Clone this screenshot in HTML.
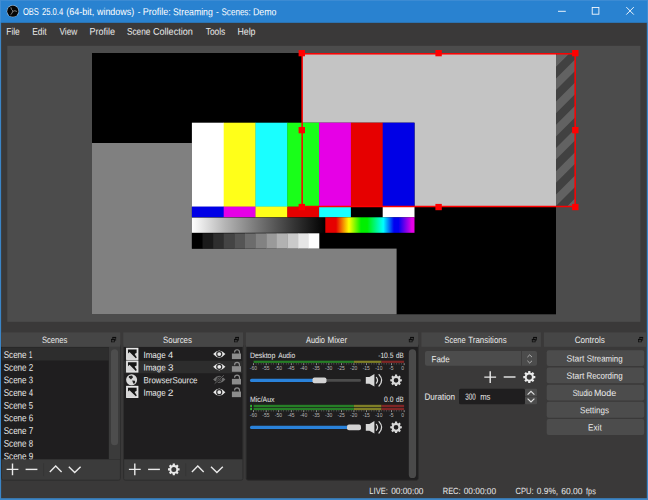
<!DOCTYPE html>
<html>
<head>
<meta charset="utf-8">
<title>OBS 25.0.4 (64-bit, windows) - Profile: Streaming - Scenes: Demo</title>
<style>
html,body{margin:0;padding:0;}
body{width:648px;height:500px;overflow:hidden;background:#3a3939;font-family:"Liberation Sans",sans-serif;}
svg{display:block;}
text{font-family:"Liberation Sans",sans-serif;}
</style>
</head>
<body>
<svg width="648" height="500" viewBox="0 0 648 500">
<defs>
<linearGradient id="gGray" x1="0" x2="1" y1="0" y2="0"><stop offset="0" stop-color="#fff"/><stop offset="0.25" stop-color="#b4b4b4"/><stop offset="0.5" stop-color="#747474"/><stop offset="0.75" stop-color="#383838"/><stop offset="1" stop-color="#000"/></linearGradient>
<linearGradient id="gRain" x1="0" x2="1" y1="0" y2="0"><stop offset="0" stop-color="#e60000"/><stop offset="0.12" stop-color="#e60000"/><stop offset="0.265" stop-color="#ffff00"/><stop offset="0.40" stop-color="#00f000"/><stop offset="0.47" stop-color="#00f000"/><stop offset="0.65" stop-color="#00ffff"/><stop offset="0.77" stop-color="#0000f0"/><stop offset="0.82" stop-color="#0000f0"/><stop offset="0.97" stop-color="#e600e6"/><stop offset="1" stop-color="#e600e6"/></linearGradient>
<clipPath id="cScenes"><rect x="1.4" y="346.8" width="118.9" height="112.7"/></clipPath>
</defs>
<rect x="0.00" y="0.00" width="648.00" height="500.00" fill="#3a3939"/>
<rect x="0.00" y="0.00" width="648.00" height="22.80" fill="#2982d0"/>
<rect x="0.00" y="0.00" width="648.00" height="0.90" fill="#3f8dd4"/>
<rect x="0.00" y="0.00" width="1.00" height="22.80" fill="#3f8dd4"/>
<rect x="647.00" y="0.00" width="1.00" height="22.80" fill="#3f8dd4"/>
<rect x="0.00" y="22.80" width="1.10" height="478.00" fill="#3b85c7"/>
<rect x="646.80" y="22.80" width="1.20" height="478.00" fill="#3b85c7"/>
<rect x="0.00" y="498.20" width="648.00" height="1.80" fill="#3b85c7"/>
<g transform="translate(6.45 4.75) scale(0.5333)"><circle cx="12" cy="12" r="11.5" fill="#a9c8e6"/><circle cx="12" cy="12" r="10.6" fill="#050505"/><path d="M11.6 11.2 Q8.6 9.6 8.4 5.6 M12.9 12 Q15.5 9.8 19 12.2 M11.5 12.8 Q11.6 16.4 8.2 18.4" stroke="#8c8c8c" stroke-width="1.7" stroke-linecap="round" fill="none"/></g>
<path d="M558 11.3 H565.8" stroke="#fff" stroke-width="0.9" fill="none"/>
<rect x="592.2" y="7.5" width="6.7" height="6.7" stroke="#fff" stroke-width="0.85" fill="none"/>
<path d="M626.3 7.1 L633.8 14.6 M633.8 7.1 L626.3 14.6" stroke="#fff" stroke-width="0.9" fill="none"/>
<rect x="7.30" y="45.80" width="633.10" height="276.00" fill="#4c4c4c"/>
<rect x="92.00" y="53.00" width="464.00" height="261.30" fill="#000"/>
<rect x="92.00" y="143.00" width="304.60" height="171.30" fill="#808080"/>
<rect x="302.00" y="53.50" width="254.00" height="153.00" fill="#c4c4c4"/>
<rect x="556.00" y="53.50" width="19.00" height="153.00" fill="#414141"/>
<clipPath id="cHatch"><rect x="556" y="53.5" width="19" height="153"/></clipPath>
<path d="M555 33.00 L576 12.00 L576 23.60 L555 44.60 Z M555 56.20 L576 35.20 L576 46.80 L555 67.80 Z M555 79.40 L576 58.40 L576 70.00 L555 91.00 Z M555 102.60 L576 81.60 L576 93.20 L555 114.20 Z M555 125.80 L576 104.80 L576 116.40 L555 137.40 Z M555 149.00 L576 128.00 L576 139.60 L555 160.60 Z M555 172.20 L576 151.20 L576 162.80 L555 183.80 Z M555 195.40 L576 174.40 L576 186.00 L555 207.00 Z M555 218.60 L576 197.60 L576 209.20 L555 230.20 Z M555 241.80 L576 220.80 L576 232.40 L555 253.40 Z" fill="#626262" clip-path="url(#cHatch)"/>
<rect x="191.90" y="122.70" width="222.60" height="125.90" fill="#000"/>
<rect x="191.90" y="122.70" width="32.10" height="84.20" fill="#ffffff"/>
<rect x="223.70" y="122.70" width="32.10" height="84.20" fill="#ffff19"/>
<rect x="255.50" y="122.70" width="32.10" height="84.20" fill="#19ffff"/>
<rect x="287.30" y="122.70" width="32.10" height="84.20" fill="#19ff19"/>
<rect x="319.10" y="122.70" width="32.10" height="84.20" fill="#e600e6"/>
<rect x="350.90" y="122.70" width="32.10" height="84.20" fill="#e60000"/>
<rect x="382.70" y="122.70" width="31.80" height="84.20" fill="#0000e6"/>
<rect x="191.90" y="206.60" width="32.10" height="10.70" fill="#0000e6"/>
<rect x="223.70" y="206.60" width="32.10" height="10.70" fill="#e600e6"/>
<rect x="255.50" y="206.60" width="32.10" height="10.70" fill="#ffff19"/>
<rect x="287.30" y="206.60" width="32.10" height="10.70" fill="#e60000"/>
<rect x="319.10" y="206.60" width="32.10" height="10.70" fill="#19ffff"/>
<rect x="350.90" y="206.60" width="32.10" height="10.70" fill="#000000"/>
<rect x="382.70" y="206.60" width="31.80" height="10.70" fill="#ffffff"/>
<rect x="191.90" y="217.60" width="133.40" height="15.20" fill="url(#gGray)"/>
<rect x="325.30" y="217.30" width="89.20" height="15.50" fill="url(#gRain)"/>
<rect x="191.90" y="233.30" width="10.92" height="15.30" fill="#000000"/>
<rect x="202.52" y="233.30" width="10.92" height="15.30" fill="#1a1a1a"/>
<rect x="213.13" y="233.30" width="10.92" height="15.30" fill="#2e2e2e"/>
<rect x="223.75" y="233.30" width="10.92" height="15.30" fill="#444444"/>
<rect x="234.37" y="233.30" width="10.92" height="15.30" fill="#555555"/>
<rect x="244.98" y="233.30" width="10.92" height="15.30" fill="#6c6c6c"/>
<rect x="255.60" y="233.30" width="10.92" height="15.30" fill="#828282"/>
<rect x="266.22" y="233.30" width="10.92" height="15.30" fill="#9a9a9a"/>
<rect x="276.83" y="233.30" width="10.92" height="15.30" fill="#b2b2b2"/>
<rect x="287.45" y="233.30" width="10.92" height="15.30" fill="#cacaca"/>
<rect x="298.07" y="233.30" width="10.92" height="15.30" fill="#e6e6e6"/>
<rect x="308.68" y="233.30" width="10.62" height="15.30" fill="#ffffff"/>
<rect x="302.15" y="53.8" width="273.0" height="152.7" fill="none" stroke="#ff0000" stroke-width="1.5"/>
<rect x="298.60" y="50.00" width="6.40" height="6.30" fill="#ff0000"/>
<rect x="298.60" y="127.00" width="6.40" height="6.30" fill="#ff0000"/>
<rect x="298.60" y="203.90" width="6.40" height="6.30" fill="#ff0000"/>
<rect x="435.40" y="50.00" width="6.40" height="6.30" fill="#ff0000"/>
<rect x="435.40" y="203.90" width="6.40" height="6.30" fill="#ff0000"/>
<rect x="572.10" y="50.00" width="6.40" height="6.30" fill="#ff0000"/>
<rect x="572.10" y="127.00" width="6.40" height="6.30" fill="#ff0000"/>
<rect x="572.10" y="203.90" width="6.40" height="6.30" fill="#ff0000"/>
<rect x="1.50" y="344.00" width="118.90" height="136.20" rx="1.8" fill="#3b3b3b" stroke="#2c2c2c" stroke-width="0.9"/>
<rect x="1.10" y="346.80" width="118.90" height="112.50" fill="#1f1e1f"/>
<rect x="1.60" y="347.30" width="107.20" height="13.20" fill="#2d2d2d"/>
<rect x="108.80" y="346.90" width="11.20" height="112.40" fill="#3b3b3b"/>
<rect x="111.00" y="349.30" width="7.10" height="96.00" rx="3.5" fill="#4d4d4d"/>
<g clip-path="url(#cScenes)">
<text x="3.74" y="357.95" font-size="9.8" fill="#eaeaea" transform="rotate(0.05 3.74 357.95)"><tspan x="3.74" textLength="22.84" lengthAdjust="spacingAndGlyphs">Scene</tspan> <tspan x="29.00" textLength="3.32" lengthAdjust="spacingAndGlyphs">1</tspan></text>
<text x="3.74" y="370.63" font-size="9.8" fill="#eaeaea" transform="rotate(0.05 3.74 370.63)"><tspan x="3.74" textLength="22.84" lengthAdjust="spacingAndGlyphs">Scene</tspan> <tspan x="28.65" textLength="4.47" lengthAdjust="spacingAndGlyphs">2</tspan></text>
<text x="3.74" y="383.31" font-size="9.8" fill="#eaeaea" transform="rotate(0.05 3.74 383.31)"><tspan x="3.74" textLength="22.84" lengthAdjust="spacingAndGlyphs">Scene</tspan> <tspan x="28.78" textLength="4.29" lengthAdjust="spacingAndGlyphs">3</tspan></text>
<text x="3.74" y="395.99" font-size="9.8" fill="#eaeaea" transform="rotate(0.05 3.74 395.99)"><tspan x="3.74" textLength="22.84" lengthAdjust="spacingAndGlyphs">Scene</tspan> <tspan x="28.90" textLength="4.03" lengthAdjust="spacingAndGlyphs">4</tspan></text>
<text x="3.74" y="408.67" font-size="9.8" fill="#eaeaea" transform="rotate(0.05 3.74 408.67)"><tspan x="3.74" textLength="22.84" lengthAdjust="spacingAndGlyphs">Scene</tspan> <tspan x="28.74" textLength="4.33" lengthAdjust="spacingAndGlyphs">5</tspan></text>
<text x="3.74" y="421.35" font-size="9.8" fill="#eaeaea" transform="rotate(0.05 3.74 421.35)"><tspan x="3.74" textLength="22.84" lengthAdjust="spacingAndGlyphs">Scene</tspan> <tspan x="28.65" textLength="4.43" lengthAdjust="spacingAndGlyphs">6</tspan></text>
<text x="3.74" y="434.03" font-size="9.8" fill="#eaeaea" transform="rotate(0.05 3.74 434.03)"><tspan x="3.74" textLength="22.84" lengthAdjust="spacingAndGlyphs">Scene</tspan> <tspan x="28.65" textLength="4.47" lengthAdjust="spacingAndGlyphs">7</tspan></text>
<text x="3.74" y="446.71" font-size="9.8" fill="#eaeaea" transform="rotate(0.05 3.74 446.71)"><tspan x="3.74" textLength="22.84" lengthAdjust="spacingAndGlyphs">Scene</tspan> <tspan x="28.74" textLength="4.33" lengthAdjust="spacingAndGlyphs">8</tspan></text>
<text x="3.74" y="459.39" font-size="9.8" fill="#eaeaea" transform="rotate(0.05 3.74 459.39)"><tspan x="3.74" textLength="22.84" lengthAdjust="spacingAndGlyphs">Scene</tspan> <tspan x="28.69" textLength="4.43" lengthAdjust="spacingAndGlyphs">9</tspan></text>
</g>
<g transform="translate(0.4 0.1)">
<path d="M6.2 469.3 H18 M12.1 463.4 V475.2" stroke="#eaeaea" stroke-width="1.4" fill="none"/>
<path d="M25.2 469.3 H37" stroke="#eaeaea" stroke-width="1.4" fill="none"/>
<path d="M49.4 471.8 L55.3 466 L61.2 471.8" stroke="#eaeaea" stroke-width="1.4" fill="none"/>
<path d="M68.4 466.6 L74.3 472.4 L80.2 466.6" stroke="#eaeaea" stroke-width="1.4" fill="none"/>
<path d="M43.2 463 V476" stroke="#333" stroke-width="0.7" fill="none"/>
</g>
<rect x="123.60" y="344.00" width="119.30" height="136.20" rx="1.8" fill="#3b3b3b" stroke="#2c2c2c" stroke-width="0.9"/>
<rect x="124.00" y="346.80" width="118.50" height="112.50" fill="#1f1e1f"/>
<rect x="124.00" y="360.80" width="118.50" height="12.50" fill="#2d2d2d"/>
<g transform="translate(0.7 0.1)">
<path d="M128.2 469.3 H140 M134.1 463.4 V475.2" stroke="#eaeaea" stroke-width="1.4" fill="none"/>
<path d="M147.4 469.3 H159.2" stroke="#eaeaea" stroke-width="1.4" fill="none"/>
<path d="M191.2 471.8 L197.1 466 L203 471.8" stroke="#eaeaea" stroke-width="1.4" fill="none"/>
<path d="M210.3 466.6 L216.2 472.4 L222.1 466.6" stroke="#eaeaea" stroke-width="1.4" fill="none"/>
<path d="M185 463 V476" stroke="#333" stroke-width="0.7" fill="none"/>
<path d="M177.45 468.15 L178.90 468.24 L178.90 470.36 L177.45 470.45 L176.99 471.56 L177.95 472.65 L176.45 474.15 L175.36 473.19 L174.25 473.65 L174.16 475.10 L172.04 475.10 L171.95 473.65 L170.84 473.19 L169.75 474.15 L168.25 472.65 L169.21 471.56 L168.75 470.45 L167.30 470.36 L167.30 468.24 L168.75 468.15 L169.21 467.04 L168.25 465.95 L169.75 464.45 L170.84 465.41 L171.95 464.95 L172.04 463.50 L174.16 463.50 L174.25 464.95 L175.36 465.41 L176.45 464.45 L177.95 465.95 L176.99 467.04 Z M175.60 469.30 A2.50 2.50 0 1 0 170.60 469.30 A2.50 2.50 0 1 0 175.60 469.30 Z" fill="#eaeaea" fill-rule="evenodd"/>
</g>
<rect x="126.10" y="347.80" width="12.3" height="12.1" fill="#ececec"/>
<rect x="127.10" y="348.80" width="10.3" height="10.1" fill="#d6d6d6"/>
<path d="M128.00 349.60 L136.60 349.60 L136.60 352.80 L134.60 353.90 L136.80 357.40 L135.80 358.30 L129.50 352.10 L128.00 353.50 Z" fill="#161616"/>
<path d="M213.15 354.10 Q219.25 346.80 225.35 354.10 Q219.25 361.40 213.15 354.10 Z" fill="#e8e8e8"/>
<circle cx="219.25" cy="354.10" r="2.5" fill="none" stroke="#2a2a2a" stroke-width="1.2"/>
<rect x="231.90" y="353.50" width="9.1" height="5.6" fill="#8c8c8c"/>
<path d="M234.60 352.50 V352.20 A2.45 2.45 0 0 1 239.50 352.20 V353.70" stroke="#8c8c8c" stroke-width="1.2" fill="none"/>
<text x="143.43" y="357.90" font-size="9.0" fill="#eaeaea" transform="rotate(0.05 143.43 357.90)"><tspan x="143.43" textLength="22.35" lengthAdjust="spacingAndGlyphs">Image</tspan> <tspan x="168.07" textLength="5.13" lengthAdjust="spacingAndGlyphs">4</tspan></text>
<rect x="126.10" y="360.48" width="12.3" height="12.1" fill="#ececec"/>
<rect x="127.10" y="361.48" width="10.3" height="10.1" fill="#d6d6d6"/>
<path d="M128.00 362.28 L136.60 362.28 L136.60 365.48 L134.60 366.58 L136.80 370.08 L135.80 370.98 L129.50 364.78 L128.00 366.18 Z" fill="#161616"/>
<path d="M213.15 366.78 Q219.25 359.48 225.35 366.78 Q219.25 374.08 213.15 366.78 Z" fill="#e8e8e8"/>
<circle cx="219.25" cy="366.78" r="2.5" fill="none" stroke="#2a2a2a" stroke-width="1.2"/>
<rect x="231.90" y="366.18" width="9.1" height="5.6" fill="#8c8c8c"/>
<path d="M234.60 365.18 V364.88 A2.45 2.45 0 0 1 239.50 364.88 V366.38" stroke="#8c8c8c" stroke-width="1.2" fill="none"/>
<text x="143.43" y="370.52" font-size="9.0" fill="#eaeaea" transform="rotate(0.05 143.43 370.52)"><tspan x="143.43" textLength="22.35" lengthAdjust="spacingAndGlyphs">Image</tspan> <tspan x="167.91" textLength="5.45" lengthAdjust="spacingAndGlyphs">3</tspan></text>
<circle cx="131.6" cy="379.8" r="5.5" fill="#d8d8d8"/>
<path d="M129.00 375.90 L132.00 375.50 L133.10 377.20 L131.80 378.60 L131.00 379.60 L129.70 378.20 L128.70 377.40 Z" fill="#222"/>
<path d="M132.20 380.40 L134.90 380.80 L135.20 382.40 L133.80 384.00 L132.90 382.40 Z" fill="#222"/>
<path d="M213.15 379.46 Q219.25 372.16 225.35 379.46 Q219.25 386.76 213.15 379.46 Z" fill="#6e6e6e"/>
<circle cx="219.25" cy="379.46" r="2.3" fill="none" stroke="#1f1e1f" stroke-width="0.9"/>
<path d="M214.65 383.66 L223.85 375.26" stroke="#1f1e1f" stroke-width="2.2"/>
<path d="M214.65 383.66 L223.85 375.26" stroke="#6e6e6e" stroke-width="0.8"/>
<rect x="231.90" y="378.86" width="9.1" height="5.6" fill="#8c8c8c"/>
<path d="M234.60 377.86 V377.56 A2.45 2.45 0 0 1 239.50 377.56 V379.06" stroke="#8c8c8c" stroke-width="1.2" fill="none"/>
<text x="143.52" y="383.14" font-size="9.0" fill="#eaeaea" textLength="53.96" lengthAdjust="spacingAndGlyphs" transform="rotate(0.05 143.52 383.14)">BrowserSource</text>
<rect x="126.10" y="385.84" width="12.3" height="12.1" fill="#ececec"/>
<rect x="127.10" y="386.84" width="10.3" height="10.1" fill="#d6d6d6"/>
<path d="M128.00 387.64 L136.60 387.64 L136.60 390.84 L134.60 391.94 L136.80 395.44 L135.80 396.34 L129.50 390.14 L128.00 391.54 Z" fill="#161616"/>
<path d="M213.15 392.14 Q219.25 384.84 225.35 392.14 Q219.25 399.44 213.15 392.14 Z" fill="#e8e8e8"/>
<circle cx="219.25" cy="392.14" r="2.5" fill="none" stroke="#2a2a2a" stroke-width="1.2"/>
<rect x="231.90" y="391.54" width="9.1" height="5.6" fill="#8c8c8c"/>
<path d="M234.60 390.54 V390.24 A2.45 2.45 0 0 1 239.50 390.24 V391.74" stroke="#8c8c8c" stroke-width="1.2" fill="none"/>
<text x="143.43" y="395.76" font-size="9.0" fill="#eaeaea" transform="rotate(0.05 143.43 395.76)"><tspan x="143.43" textLength="22.35" lengthAdjust="spacingAndGlyphs">Image</tspan> <tspan x="167.74" textLength="5.68" lengthAdjust="spacingAndGlyphs">2</tspan></text>
<rect x="246.20" y="344.00" width="172.10" height="136.20" rx="1.8" fill="#1f1e1f" stroke="#2c2c2c" stroke-width="0.9"/>
<rect x="408.80" y="349.30" width="7.30" height="128.80" rx="3.6" fill="#4a4a4a"/>
<rect x="253.60" y="360.70" width="100.33" height="2.2" fill="#267f26"/><rect x="353.93" y="360.70" width="27.59" height="2.2" fill="#7f7f26"/><rect x="381.53" y="360.70" width="22.57" height="2.2" fill="#7f2626"/>
<rect x="253.25" y="363.20" width="0.75" height="1.9" fill="#b0b0b0"/><rect x="255.81" y="363.20" width="0.6" height="1.3" fill="#707070"/><rect x="258.32" y="363.20" width="0.6" height="1.3" fill="#707070"/><rect x="260.82" y="363.20" width="0.6" height="1.3" fill="#707070"/><rect x="263.33" y="363.20" width="0.6" height="1.3" fill="#707070"/><rect x="265.79" y="363.20" width="0.75" height="1.9" fill="#b0b0b0"/><rect x="268.35" y="363.20" width="0.6" height="1.3" fill="#707070"/><rect x="270.86" y="363.20" width="0.6" height="1.3" fill="#707070"/><rect x="273.37" y="363.20" width="0.6" height="1.3" fill="#707070"/><rect x="275.88" y="363.20" width="0.6" height="1.3" fill="#707070"/><rect x="278.33" y="363.20" width="0.75" height="1.9" fill="#b0b0b0"/><rect x="280.89" y="363.20" width="0.6" height="1.3" fill="#707070"/><rect x="283.40" y="363.20" width="0.6" height="1.3" fill="#707070"/><rect x="285.91" y="363.20" width="0.6" height="1.3" fill="#707070"/><rect x="288.42" y="363.20" width="0.6" height="1.3" fill="#707070"/><rect x="290.88" y="363.20" width="0.75" height="1.9" fill="#b0b0b0"/><rect x="293.43" y="363.20" width="0.6" height="1.3" fill="#707070"/><rect x="295.94" y="363.20" width="0.6" height="1.3" fill="#707070"/><rect x="298.45" y="363.20" width="0.6" height="1.3" fill="#707070"/><rect x="300.96" y="363.20" width="0.6" height="1.3" fill="#707070"/><rect x="303.42" y="363.20" width="0.75" height="1.9" fill="#b0b0b0"/><rect x="305.97" y="363.20" width="0.6" height="1.3" fill="#707070"/><rect x="308.48" y="363.20" width="0.6" height="1.3" fill="#707070"/><rect x="310.99" y="363.20" width="0.6" height="1.3" fill="#707070"/><rect x="313.50" y="363.20" width="0.6" height="1.3" fill="#707070"/><rect x="315.96" y="363.20" width="0.75" height="1.9" fill="#b0b0b0"/><rect x="318.52" y="363.20" width="0.6" height="1.3" fill="#707070"/><rect x="321.02" y="363.20" width="0.6" height="1.3" fill="#707070"/><rect x="323.53" y="363.20" width="0.6" height="1.3" fill="#707070"/><rect x="326.04" y="363.20" width="0.6" height="1.3" fill="#707070"/><rect x="328.50" y="363.20" width="0.75" height="1.9" fill="#b0b0b0"/><rect x="331.06" y="363.20" width="0.6" height="1.3" fill="#707070"/><rect x="333.57" y="363.20" width="0.6" height="1.3" fill="#707070"/><rect x="336.07" y="363.20" width="0.6" height="1.3" fill="#707070"/><rect x="338.58" y="363.20" width="0.6" height="1.3" fill="#707070"/><rect x="341.04" y="363.20" width="0.75" height="1.9" fill="#b0b0b0"/><rect x="343.60" y="363.20" width="0.6" height="1.3" fill="#707070"/><rect x="346.11" y="363.20" width="0.6" height="1.3" fill="#707070"/><rect x="348.62" y="363.20" width="0.6" height="1.3" fill="#707070"/><rect x="351.12" y="363.20" width="0.6" height="1.3" fill="#707070"/><rect x="353.58" y="363.20" width="0.75" height="1.9" fill="#b0b0b0"/><rect x="356.14" y="363.20" width="0.6" height="1.3" fill="#707070"/><rect x="358.65" y="363.20" width="0.6" height="1.3" fill="#707070"/><rect x="361.16" y="363.20" width="0.6" height="1.3" fill="#707070"/><rect x="363.67" y="363.20" width="0.6" height="1.3" fill="#707070"/><rect x="366.12" y="363.20" width="0.75" height="1.9" fill="#b0b0b0"/><rect x="368.68" y="363.20" width="0.6" height="1.3" fill="#707070"/><rect x="371.19" y="363.20" width="0.6" height="1.3" fill="#707070"/><rect x="373.70" y="363.20" width="0.6" height="1.3" fill="#707070"/><rect x="376.21" y="363.20" width="0.6" height="1.3" fill="#707070"/><rect x="378.67" y="363.20" width="0.75" height="1.9" fill="#b0b0b0"/><rect x="381.23" y="363.20" width="0.6" height="1.3" fill="#707070"/><rect x="383.73" y="363.20" width="0.6" height="1.3" fill="#707070"/><rect x="386.24" y="363.20" width="0.6" height="1.3" fill="#707070"/><rect x="388.75" y="363.20" width="0.6" height="1.3" fill="#707070"/><rect x="391.21" y="363.20" width="0.75" height="1.9" fill="#b0b0b0"/><rect x="393.77" y="363.20" width="0.6" height="1.3" fill="#707070"/><rect x="396.28" y="363.20" width="0.6" height="1.3" fill="#707070"/><rect x="398.78" y="363.20" width="0.6" height="1.3" fill="#707070"/><rect x="401.29" y="363.20" width="0.6" height="1.3" fill="#707070"/><rect x="403.75" y="363.20" width="0.75" height="1.9" fill="#b0b0b0"/>
<g opacity="0.99"><text x="253.40" y="369.70" text-anchor="middle" font-size="5.0" fill="#b8b8b8">-60</text><text x="265.94" y="369.70" text-anchor="middle" font-size="5.0" fill="#b8b8b8">-55</text><text x="278.48" y="369.70" text-anchor="middle" font-size="5.0" fill="#b8b8b8">-50</text><text x="291.03" y="369.70" text-anchor="middle" font-size="5.0" fill="#b8b8b8">-45</text><text x="303.57" y="369.70" text-anchor="middle" font-size="5.0" fill="#b8b8b8">-40</text><text x="316.11" y="369.70" text-anchor="middle" font-size="5.0" fill="#b8b8b8">-35</text><text x="328.65" y="369.70" text-anchor="middle" font-size="5.0" fill="#b8b8b8">-30</text><text x="341.19" y="369.70" text-anchor="middle" font-size="5.0" fill="#b8b8b8">-25</text><text x="353.73" y="369.70" text-anchor="middle" font-size="5.0" fill="#b8b8b8">-20</text><text x="366.28" y="369.70" text-anchor="middle" font-size="5.0" fill="#b8b8b8">-15</text><text x="378.82" y="369.70" text-anchor="middle" font-size="5.0" fill="#b8b8b8">-10</text><text x="391.36" y="369.70" text-anchor="middle" font-size="5.0" fill="#b8b8b8">-5</text><text x="404.10" y="369.70" text-anchor="end" font-size="5.0" fill="#b8b8b8">0</text></g>
<rect x="312.50" y="379.10" width="48.50" height="2.6" rx="1.3" fill="#4c4c4c"/><rect x="250.00" y="378.80" width="64.50" height="3.2" rx="1.6" fill="#2a82da"/><rect x="312.50" y="377.50" width="14.00" height="5.8" rx="2" fill="#d2d2d2"/>
<path d="M365.80 376.90 H369.40 L374.40 374.00 V386.60 L369.40 383.70 H365.80 Z" fill="#d8d8d8"/>
<path d="M376.40 377.40 Q378.70 380.30 376.40 383.20" stroke="#d8d8d8" stroke-width="1.25" fill="none" stroke-linecap="round"/>
<path d="M379.00 374.60 Q384.40 380.30 379.00 386.00" stroke="#d8d8d8" stroke-width="1.25" fill="none" stroke-linecap="round"/>
<path d="M400.40 379.15 L401.85 379.24 L401.85 381.36 L400.40 381.45 L399.94 382.56 L400.90 383.65 L399.40 385.15 L398.31 384.19 L397.20 384.65 L397.11 386.10 L394.99 386.10 L394.90 384.65 L393.79 384.19 L392.70 385.15 L391.20 383.65 L392.16 382.56 L391.70 381.45 L390.25 381.36 L390.25 379.24 L391.70 379.15 L392.16 378.04 L391.20 376.95 L392.70 375.45 L393.79 376.41 L394.90 375.95 L394.99 374.50 L397.11 374.50 L397.20 375.95 L398.31 376.41 L399.40 375.45 L400.90 376.95 L399.94 378.04 Z M398.40 380.30 A2.35 2.35 0 1 0 393.70 380.30 A2.35 2.35 0 1 0 398.40 380.30 Z" fill="#d8d8d8" fill-rule="evenodd"/>
<rect x="250.20" y="404.80" width="1.80" height="2.35" fill="#32b432"/>
<rect x="250.20" y="407.85" width="1.80" height="2.30" fill="#32b432"/>
<rect x="253.60" y="404.80" width="100.33" height="2.35" fill="#267f26"/><rect x="353.93" y="404.80" width="27.59" height="2.35" fill="#7f7f26"/><rect x="381.53" y="404.80" width="22.57" height="2.35" fill="#7f2626"/>
<rect x="253.60" y="407.85" width="100.33" height="2.3" fill="#267f26"/><rect x="353.93" y="407.85" width="27.59" height="2.3" fill="#7f7f26"/><rect x="381.53" y="407.85" width="22.57" height="2.3" fill="#7f2626"/>
<rect x="253.25" y="410.20" width="0.75" height="1.9" fill="#b0b0b0"/><rect x="255.81" y="410.20" width="0.6" height="1.3" fill="#707070"/><rect x="258.32" y="410.20" width="0.6" height="1.3" fill="#707070"/><rect x="260.82" y="410.20" width="0.6" height="1.3" fill="#707070"/><rect x="263.33" y="410.20" width="0.6" height="1.3" fill="#707070"/><rect x="265.79" y="410.20" width="0.75" height="1.9" fill="#b0b0b0"/><rect x="268.35" y="410.20" width="0.6" height="1.3" fill="#707070"/><rect x="270.86" y="410.20" width="0.6" height="1.3" fill="#707070"/><rect x="273.37" y="410.20" width="0.6" height="1.3" fill="#707070"/><rect x="275.88" y="410.20" width="0.6" height="1.3" fill="#707070"/><rect x="278.33" y="410.20" width="0.75" height="1.9" fill="#b0b0b0"/><rect x="280.89" y="410.20" width="0.6" height="1.3" fill="#707070"/><rect x="283.40" y="410.20" width="0.6" height="1.3" fill="#707070"/><rect x="285.91" y="410.20" width="0.6" height="1.3" fill="#707070"/><rect x="288.42" y="410.20" width="0.6" height="1.3" fill="#707070"/><rect x="290.88" y="410.20" width="0.75" height="1.9" fill="#b0b0b0"/><rect x="293.43" y="410.20" width="0.6" height="1.3" fill="#707070"/><rect x="295.94" y="410.20" width="0.6" height="1.3" fill="#707070"/><rect x="298.45" y="410.20" width="0.6" height="1.3" fill="#707070"/><rect x="300.96" y="410.20" width="0.6" height="1.3" fill="#707070"/><rect x="303.42" y="410.20" width="0.75" height="1.9" fill="#b0b0b0"/><rect x="305.97" y="410.20" width="0.6" height="1.3" fill="#707070"/><rect x="308.48" y="410.20" width="0.6" height="1.3" fill="#707070"/><rect x="310.99" y="410.20" width="0.6" height="1.3" fill="#707070"/><rect x="313.50" y="410.20" width="0.6" height="1.3" fill="#707070"/><rect x="315.96" y="410.20" width="0.75" height="1.9" fill="#b0b0b0"/><rect x="318.52" y="410.20" width="0.6" height="1.3" fill="#707070"/><rect x="321.02" y="410.20" width="0.6" height="1.3" fill="#707070"/><rect x="323.53" y="410.20" width="0.6" height="1.3" fill="#707070"/><rect x="326.04" y="410.20" width="0.6" height="1.3" fill="#707070"/><rect x="328.50" y="410.20" width="0.75" height="1.9" fill="#b0b0b0"/><rect x="331.06" y="410.20" width="0.6" height="1.3" fill="#707070"/><rect x="333.57" y="410.20" width="0.6" height="1.3" fill="#707070"/><rect x="336.07" y="410.20" width="0.6" height="1.3" fill="#707070"/><rect x="338.58" y="410.20" width="0.6" height="1.3" fill="#707070"/><rect x="341.04" y="410.20" width="0.75" height="1.9" fill="#b0b0b0"/><rect x="343.60" y="410.20" width="0.6" height="1.3" fill="#707070"/><rect x="346.11" y="410.20" width="0.6" height="1.3" fill="#707070"/><rect x="348.62" y="410.20" width="0.6" height="1.3" fill="#707070"/><rect x="351.12" y="410.20" width="0.6" height="1.3" fill="#707070"/><rect x="353.58" y="410.20" width="0.75" height="1.9" fill="#b0b0b0"/><rect x="356.14" y="410.20" width="0.6" height="1.3" fill="#707070"/><rect x="358.65" y="410.20" width="0.6" height="1.3" fill="#707070"/><rect x="361.16" y="410.20" width="0.6" height="1.3" fill="#707070"/><rect x="363.67" y="410.20" width="0.6" height="1.3" fill="#707070"/><rect x="366.12" y="410.20" width="0.75" height="1.9" fill="#b0b0b0"/><rect x="368.68" y="410.20" width="0.6" height="1.3" fill="#707070"/><rect x="371.19" y="410.20" width="0.6" height="1.3" fill="#707070"/><rect x="373.70" y="410.20" width="0.6" height="1.3" fill="#707070"/><rect x="376.21" y="410.20" width="0.6" height="1.3" fill="#707070"/><rect x="378.67" y="410.20" width="0.75" height="1.9" fill="#b0b0b0"/><rect x="381.23" y="410.20" width="0.6" height="1.3" fill="#707070"/><rect x="383.73" y="410.20" width="0.6" height="1.3" fill="#707070"/><rect x="386.24" y="410.20" width="0.6" height="1.3" fill="#707070"/><rect x="388.75" y="410.20" width="0.6" height="1.3" fill="#707070"/><rect x="391.21" y="410.20" width="0.75" height="1.9" fill="#b0b0b0"/><rect x="393.77" y="410.20" width="0.6" height="1.3" fill="#707070"/><rect x="396.28" y="410.20" width="0.6" height="1.3" fill="#707070"/><rect x="398.78" y="410.20" width="0.6" height="1.3" fill="#707070"/><rect x="401.29" y="410.20" width="0.6" height="1.3" fill="#707070"/><rect x="403.75" y="410.20" width="0.75" height="1.9" fill="#b0b0b0"/>
<g opacity="0.99"><text x="253.40" y="416.80" text-anchor="middle" font-size="5.0" fill="#b8b8b8">-60</text><text x="265.94" y="416.80" text-anchor="middle" font-size="5.0" fill="#b8b8b8">-55</text><text x="278.48" y="416.80" text-anchor="middle" font-size="5.0" fill="#b8b8b8">-50</text><text x="291.03" y="416.80" text-anchor="middle" font-size="5.0" fill="#b8b8b8">-45</text><text x="303.57" y="416.80" text-anchor="middle" font-size="5.0" fill="#b8b8b8">-40</text><text x="316.11" y="416.80" text-anchor="middle" font-size="5.0" fill="#b8b8b8">-35</text><text x="328.65" y="416.80" text-anchor="middle" font-size="5.0" fill="#b8b8b8">-30</text><text x="341.19" y="416.80" text-anchor="middle" font-size="5.0" fill="#b8b8b8">-25</text><text x="353.73" y="416.80" text-anchor="middle" font-size="5.0" fill="#b8b8b8">-20</text><text x="366.28" y="416.80" text-anchor="middle" font-size="5.0" fill="#b8b8b8">-15</text><text x="378.82" y="416.80" text-anchor="middle" font-size="5.0" fill="#b8b8b8">-10</text><text x="391.36" y="416.80" text-anchor="middle" font-size="5.0" fill="#b8b8b8">-5</text><text x="404.10" y="416.80" text-anchor="end" font-size="5.0" fill="#b8b8b8">0</text></g>
<rect x="347.00" y="426.10" width="14.00" height="2.6" rx="1.3" fill="#4c4c4c"/><rect x="250.00" y="425.80" width="99.00" height="3.2" rx="1.6" fill="#2a82da"/><rect x="347.00" y="424.50" width="14.00" height="5.8" rx="2" fill="#d2d2d2"/>
<path d="M365.80 423.90 H369.40 L374.40 421.00 V433.60 L369.40 430.70 H365.80 Z" fill="#d8d8d8"/>
<path d="M376.40 424.40 Q378.70 427.30 376.40 430.20" stroke="#d8d8d8" stroke-width="1.25" fill="none" stroke-linecap="round"/>
<path d="M379.00 421.60 Q384.40 427.30 379.00 433.00" stroke="#d8d8d8" stroke-width="1.25" fill="none" stroke-linecap="round"/>
<path d="M400.40 426.15 L401.85 426.24 L401.85 428.36 L400.40 428.45 L399.94 429.56 L400.90 430.65 L399.40 432.15 L398.31 431.19 L397.20 431.65 L397.11 433.10 L394.99 433.10 L394.90 431.65 L393.79 431.19 L392.70 432.15 L391.20 430.65 L392.16 429.56 L391.70 428.45 L390.25 428.36 L390.25 426.24 L391.70 426.15 L392.16 425.04 L391.20 423.95 L392.70 422.45 L393.79 423.41 L394.90 422.95 L394.99 421.50 L397.11 421.50 L397.20 422.95 L398.31 423.41 L399.40 422.45 L400.90 423.95 L399.94 425.04 Z M398.40 427.30 A2.35 2.35 0 1 0 393.70 427.30 A2.35 2.35 0 1 0 398.40 427.30 Z" fill="#d8d8d8" fill-rule="evenodd"/>
<text x="249.90" y="357.90" font-size="7.8" fill="#eaeaea" transform="rotate(0.05 249.90 357.90)"><tspan x="249.90" textLength="25.44" lengthAdjust="spacingAndGlyphs">Desktop</tspan> <tspan x="278.25" textLength="16.87" lengthAdjust="spacingAndGlyphs">Audio</tspan></text>
<text x="378.18" y="357.90" font-size="7.8" fill="#eaeaea" transform="rotate(0.05 378.18 357.90)"><tspan x="378.18" textLength="15.24" lengthAdjust="spacingAndGlyphs">-10.5</tspan> <tspan x="396.10" textLength="7.68" lengthAdjust="spacingAndGlyphs">dB</tspan></text>
<text x="249.90" y="401.90" font-size="7.8" fill="#eaeaea" textLength="24.62" lengthAdjust="spacingAndGlyphs" transform="rotate(0.05 249.90 401.90)">Mic/Aux</text>
<text x="384.12" y="401.90" font-size="7.8" fill="#eaeaea" transform="rotate(0.05 384.12 401.90)"><tspan x="384.12" textLength="9.27" lengthAdjust="spacingAndGlyphs">0.0</tspan> <tspan x="396.10" textLength="7.68" lengthAdjust="spacingAndGlyphs">dB</tspan></text>
<rect x="1.10" y="332.40" width="119.20" height="14.40" fill="#464646"/>
<rect x="123.30" y="332.40" width="119.70" height="14.40" fill="#464646"/>
<rect x="245.90" y="332.40" width="172.20" height="14.40" fill="#464646"/>
<rect x="421.40" y="332.40" width="119.50" height="14.40" fill="#464646"/>
<rect x="543.90" y="332.40" width="102.90" height="14.40" fill="#464646"/>
<text x="41.91" y="343.00" font-size="9.2" fill="#eaeaea" textLength="25.51" lengthAdjust="spacingAndGlyphs" transform="rotate(0.05 41.91 343.00)">Scenes</text>
<text x="163.10" y="343.00" font-size="9.2" fill="#eaeaea" textLength="28.83" lengthAdjust="spacingAndGlyphs" transform="rotate(0.05 163.10 343.00)">Sources</text>
<text x="306.05" y="343.00" font-size="9.2" fill="#eaeaea" transform="rotate(0.05 306.05 343.00)"><tspan x="306.05" textLength="18.90" lengthAdjust="spacingAndGlyphs">Audio</tspan> <tspan x="327.61" textLength="19.44" lengthAdjust="spacingAndGlyphs">Mixer</tspan></text>
<text x="444.41" y="343.00" font-size="9.2" fill="#eaeaea" transform="rotate(0.05 444.41 343.00)"><tspan x="444.41" textLength="21.25" lengthAdjust="spacingAndGlyphs">Scene</tspan> <tspan x="468.29" textLength="38.33" lengthAdjust="spacingAndGlyphs">Transitions</tspan></text>
<text x="574.64" y="343.00" font-size="9.2" fill="#eaeaea" textLength="30.19" lengthAdjust="spacingAndGlyphs" transform="rotate(0.05 574.64 343.00)">Controls</text>
<rect x="112.85" y="337.50" width="2.9" height="2.6" fill="none" stroke="#0c0c0c" stroke-width="0.7"/>
<rect x="112.50" y="336.90" width="3.6" height="1.3" fill="#0c0c0c"/>
<rect x="111.45" y="339.40" width="2.9" height="2.5" fill="#464646" stroke="#0c0c0c" stroke-width="0.7"/>
<rect x="111.10" y="338.90" width="3.6" height="1.3" fill="#0c0c0c"/>
<rect x="235.75" y="337.50" width="2.9" height="2.6" fill="none" stroke="#0c0c0c" stroke-width="0.7"/>
<rect x="235.40" y="336.90" width="3.6" height="1.3" fill="#0c0c0c"/>
<rect x="234.35" y="339.40" width="2.9" height="2.5" fill="#464646" stroke="#0c0c0c" stroke-width="0.7"/>
<rect x="234.00" y="338.90" width="3.6" height="1.3" fill="#0c0c0c"/>
<rect x="410.65" y="337.50" width="2.9" height="2.6" fill="none" stroke="#0c0c0c" stroke-width="0.7"/>
<rect x="410.30" y="336.90" width="3.6" height="1.3" fill="#0c0c0c"/>
<rect x="409.25" y="339.40" width="2.9" height="2.5" fill="#464646" stroke="#0c0c0c" stroke-width="0.7"/>
<rect x="408.90" y="338.90" width="3.6" height="1.3" fill="#0c0c0c"/>
<rect x="533.65" y="337.50" width="2.9" height="2.6" fill="none" stroke="#0c0c0c" stroke-width="0.7"/>
<rect x="533.30" y="336.90" width="3.6" height="1.3" fill="#0c0c0c"/>
<rect x="532.25" y="339.40" width="2.9" height="2.5" fill="#464646" stroke="#0c0c0c" stroke-width="0.7"/>
<rect x="531.90" y="338.90" width="3.6" height="1.3" fill="#0c0c0c"/>
<rect x="639.85" y="337.50" width="2.9" height="2.6" fill="none" stroke="#0c0c0c" stroke-width="0.7"/>
<rect x="639.50" y="336.90" width="3.6" height="1.3" fill="#0c0c0c"/>
<rect x="638.45" y="339.40" width="2.9" height="2.5" fill="#464646" stroke="#0c0c0c" stroke-width="0.7"/>
<rect x="638.10" y="338.90" width="3.6" height="1.3" fill="#0c0c0c"/>
<rect x="425.00" y="351.00" width="112.00" height="14.80" rx="2" fill="#4c4c4c"/>
<rect x="521.20" y="351.00" width="0.80" height="14.80" fill="#3a3939"/>
<rect x="459.00" y="388.80" width="66.00" height="15.40" rx="1.5" fill="#1f1e1f"/>
<rect x="525.00" y="388.80" width="12.00" height="7.40" rx="1" fill="#4c4c4c"/>
<rect x="525.00" y="396.80" width="12.00" height="7.40" rx="1" fill="#4c4c4c"/>
<path d="M484.3 377.1 H496.1 M490.2 371.2 V383" stroke="#eaeaea" stroke-width="1.4" fill="none"/>
<path d="M503.7 377 H515.5" stroke="#eaeaea" stroke-width="1.4" fill="none"/>
<path d="M527.4 357.1 L529.7 354.9 L532 357.1" stroke="#d0d0d0" stroke-width="0.75" fill="none"/>
<path d="M527.4 360.8 L529.7 363 L532 360.8" stroke="#d0d0d0" stroke-width="0.75" fill="none"/>
<path d="M527.6 394.6 L531 391.3 L534.4 394.6" stroke="#e0e0e0" stroke-width="1.15" fill="none"/>
<path d="M527.6 398.6 L531 401.9 L534.4 398.6" stroke="#e0e0e0" stroke-width="1.15" fill="none"/>
<path d="M533.75 375.92 L535.30 376.00 L535.30 378.20 L533.75 378.28 L533.28 379.41 L534.32 380.57 L532.77 382.12 L531.61 381.08 L530.48 381.55 L530.40 383.10 L528.20 383.10 L528.12 381.55 L526.99 381.08 L525.83 382.12 L524.28 380.57 L525.32 379.41 L524.85 378.28 L523.30 378.20 L523.30 376.00 L524.85 375.92 L525.32 374.79 L524.28 373.63 L525.83 372.08 L526.99 373.12 L528.12 372.65 L528.20 371.10 L530.40 371.10 L530.48 372.65 L531.61 373.12 L532.77 372.08 L534.32 373.63 L533.28 374.79 Z M531.90 377.10 A2.60 2.60 0 1 0 526.70 377.10 A2.60 2.60 0 1 0 531.90 377.10 Z" fill="#eaeaea" fill-rule="evenodd"/>
<text x="431.62" y="362.20" font-size="9.0" fill="#eaeaea" textLength="18.06" lengthAdjust="spacingAndGlyphs" transform="rotate(0.05 431.62 362.20)">Fade</text>
<text x="424.40" y="399.85" font-size="9.0" fill="#eaeaea" textLength="30.75" lengthAdjust="spacingAndGlyphs" transform="rotate(0.05 424.40 399.85)">Duration</text>
<text x="465.33" y="399.85" font-size="9.0" fill="#eaeaea" transform="rotate(0.05 465.33 399.85)"><tspan x="465.33" textLength="10.55" lengthAdjust="spacingAndGlyphs">300</tspan> <tspan x="480.15" textLength="10.27" lengthAdjust="spacingAndGlyphs">ms</tspan></text>
<rect x="546.70" y="350.20" width="97.50" height="15.80" rx="2" fill="#4c4c4c"/>
<text x="566.47" y="361.60" font-size="9.0" fill="#eaeaea" transform="rotate(0.05 566.47 361.60)"><tspan x="566.47" textLength="18.01" lengthAdjust="spacingAndGlyphs">Start</tspan> <tspan x="586.70" textLength="35.94" lengthAdjust="spacingAndGlyphs">Streaming</tspan></text>
<rect x="546.70" y="367.42" width="97.50" height="15.80" rx="2" fill="#4c4c4c"/>
<text x="566.47" y="378.80" font-size="9.0" fill="#eaeaea" transform="rotate(0.05 566.47 378.80)"><tspan x="566.47" textLength="18.01" lengthAdjust="spacingAndGlyphs">Start</tspan> <tspan x="586.41" textLength="36.22" lengthAdjust="spacingAndGlyphs">Recording</tspan></text>
<rect x="546.70" y="384.64" width="97.50" height="15.80" rx="2" fill="#4c4c4c"/>
<text x="572.74" y="396.00" font-size="9.0" fill="#eaeaea" transform="rotate(0.05 572.74 396.00)"><tspan x="572.74" textLength="19.70" lengthAdjust="spacingAndGlyphs">Studio</tspan> <tspan x="593.93" textLength="22.38" lengthAdjust="spacingAndGlyphs">Mode</tspan></text>
<rect x="546.70" y="401.86" width="97.50" height="15.80" rx="2" fill="#4c4c4c"/>
<text x="580.09" y="413.20" font-size="9.0" fill="#eaeaea" textLength="28.94" lengthAdjust="spacingAndGlyphs" transform="rotate(0.05 580.09 413.20)">Settings</text>
<rect x="546.70" y="419.08" width="97.50" height="15.80" rx="2" fill="#4c4c4c"/>
<text x="588.10" y="430.40" font-size="9.0" fill="#eaeaea" textLength="13.57" lengthAdjust="spacingAndGlyphs" transform="rotate(0.05 588.10 430.40)">Exit</text>
<text x="22.91" y="15.00" font-size="10.0" fill="#ffffff" transform="rotate(0.05 22.91 15.00)"><tspan x="22.91" textLength="15.96" lengthAdjust="spacingAndGlyphs">OBS</tspan> <tspan x="41.97" textLength="21.18" lengthAdjust="spacingAndGlyphs">25.0.4</tspan> <tspan x="66.31" textLength="28.03" lengthAdjust="spacingAndGlyphs">(64-bit,</tspan> <tspan x="96.99" textLength="37.17" lengthAdjust="spacingAndGlyphs">windows)</tspan> <tspan x="137.73" textLength="2.66" lengthAdjust="spacingAndGlyphs">-</tspan> <tspan x="142.73" textLength="28.01" lengthAdjust="spacingAndGlyphs">Profile:</tspan> <tspan x="173.06" textLength="39.73" lengthAdjust="spacingAndGlyphs">Streaming</tspan> <tspan x="216.01" textLength="2.80" lengthAdjust="spacingAndGlyphs">-</tspan> <tspan x="221.49" textLength="29.17" lengthAdjust="spacingAndGlyphs">Scenes:</tspan> <tspan x="252.94" textLength="23.57" lengthAdjust="spacingAndGlyphs">Demo</tspan></text>
<text x="6.28" y="34.70" font-size="9.7" fill="#eaeaea" textLength="13.52" lengthAdjust="spacingAndGlyphs" transform="rotate(0.05 6.28 34.70)">File</text>
<text x="32.18" y="34.70" font-size="9.7" fill="#eaeaea" textLength="14.50" lengthAdjust="spacingAndGlyphs" transform="rotate(0.05 32.18 34.70)">Edit</text>
<text x="59.45" y="34.70" font-size="9.7" fill="#eaeaea" textLength="17.98" lengthAdjust="spacingAndGlyphs" transform="rotate(0.05 59.45 34.70)">View</text>
<text x="89.53" y="34.70" font-size="9.7" fill="#eaeaea" textLength="25.49" lengthAdjust="spacingAndGlyphs" transform="rotate(0.05 89.53 34.70)">Profile</text>
<text x="126.98" y="34.70" font-size="9.7" fill="#eaeaea" transform="rotate(0.05 126.98 34.70)"><tspan x="126.98" textLength="23.41" lengthAdjust="spacingAndGlyphs">Scene</tspan> <tspan x="153.00" textLength="39.81" lengthAdjust="spacingAndGlyphs">Collection</tspan></text>
<text x="205.68" y="34.70" font-size="9.7" fill="#eaeaea" textLength="19.66" lengthAdjust="spacingAndGlyphs" transform="rotate(0.05 205.68 34.70)">Tools</text>
<text x="237.45" y="34.70" font-size="9.7" fill="#eaeaea" textLength="18.06" lengthAdjust="spacingAndGlyphs" transform="rotate(0.05 237.45 34.70)">Help</text>
<text x="369.35" y="494.10" font-size="9.0" fill="#eaeaea" transform="rotate(0.05 369.35 494.10)"><tspan x="369.35" textLength="18.47" lengthAdjust="spacingAndGlyphs">LIVE:</tspan> <tspan x="391.16" textLength="32.29" lengthAdjust="spacingAndGlyphs">00:00:00</tspan></text>
<text x="442.75" y="494.10" font-size="9.0" fill="#eaeaea" transform="rotate(0.05 442.75 494.10)"><tspan x="442.75" textLength="17.85" lengthAdjust="spacingAndGlyphs">REC:</tspan> <tspan x="463.76" textLength="32.29" lengthAdjust="spacingAndGlyphs">00:00:00</tspan></text>
<text x="515.57" y="494.10" font-size="9.0" fill="#eaeaea" transform="rotate(0.05 515.57 494.10)"><tspan x="515.57" textLength="18.04" lengthAdjust="spacingAndGlyphs">CPU:</tspan> <tspan x="536.86" textLength="21.22" lengthAdjust="spacingAndGlyphs">0.9%,</tspan> <tspan x="561.33" textLength="21.23" lengthAdjust="spacingAndGlyphs">60.00</tspan> <tspan x="586.08" textLength="9.73" lengthAdjust="spacingAndGlyphs">fps</tspan></text>
</svg>
</body>
</html>
